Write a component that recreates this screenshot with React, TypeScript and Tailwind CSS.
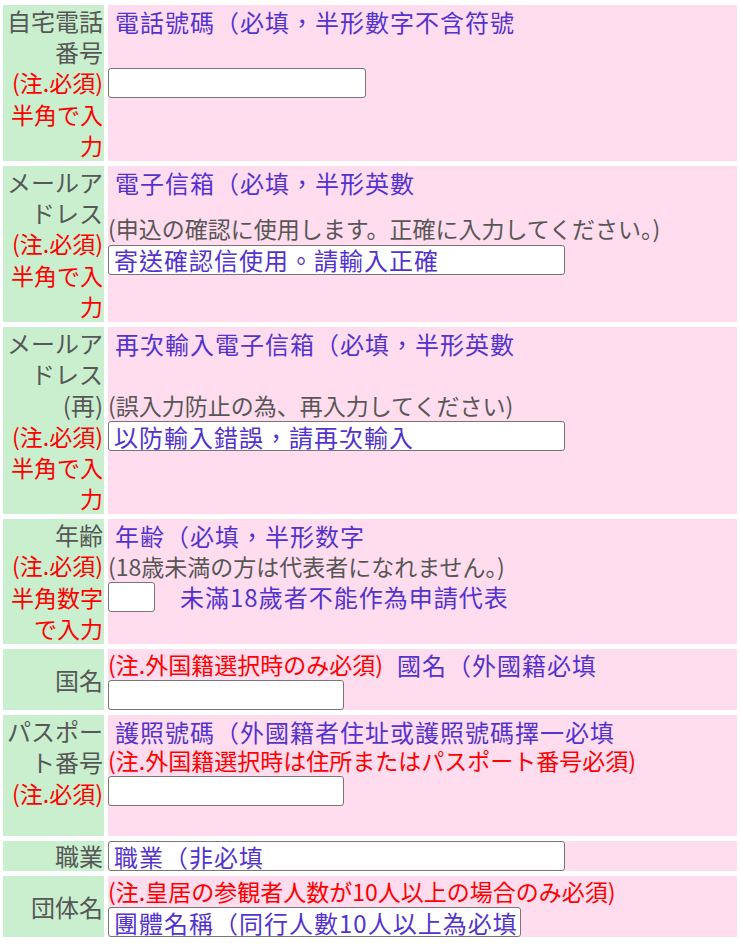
import React from "react";

const JP = "font-['Noto_Sans_CJK_JP',sans-serif]";
const TC = "font-['Noto_Sans_CJK_TC',sans-serif]";

function Gray({ children }: { children: React.ReactNode }) {
  return <div className="whitespace-nowrap text-[24px] text-[#575757]">{children}</div>;
}
function Red({ children }: { children: React.ReactNode }) {
  return <div className="whitespace-nowrap text-[23px] text-[#ff0000]">{children}</div>;
}

function Note({ children }: { children: React.ReactNode }) {
  return (
    <div
      className={`absolute left-[7px] top-[1px] whitespace-nowrap ${TC} font-normal text-[24px] leading-[31px] tracking-[1px] text-[#5333d0]`}
    >
      {children}
    </div>
  );
}

function Field({ w, ph }: { w: string; ph?: string }) {
  return (
    <input
      type="text"
      readOnly
      placeholder={ph}
      className={`${w} h-[30px] shrink-0 rounded-[3px] border border-[#767676] bg-white py-0 pl-[5px] pr-0 ${TC} font-normal text-[24px] leading-[28px] tracking-[1px] outline-none placeholder:text-[#5333d0]`}
    />
  );
}

function Line({ children, red }: { children: React.ReactNode; red?: boolean }) {
  return (
    <div
      className={`whitespace-nowrap text-[23px] leading-[31.2px] ${red ? "text-[#ff0000]" : "text-[#575757]"}`}
    >
      {children}
    </div>
  );
}

function Row({
  label,
  children,
  note,
  rowClass = "",
  labelClass = "justify-center",
}: {
  label: React.ReactNode;
  children: React.ReactNode;
  note?: React.ReactNode;
  rowClass?: string;
  labelClass?: string;
}) {
  return (
    <div className={`flex gap-[4px] ${rowClass}`}>
      <div
        className={`flex w-[101px] shrink-0 flex-col items-end bg-[#c9efcf] pr-[1px] text-right leading-[31.2px] ${labelClass}`}
      >
        {label}
      </div>
      <div className="relative flex w-[629px] flex-col items-start justify-center bg-[#ffdcee]">
        {note && <Note>{note}</Note>}
        {children}
      </div>
    </div>
  );
}

export default function App() {
  return (
    <div className={`min-h-[946px] w-[740px] bg-white ${JP}`}>
      <div className="flex flex-col gap-[5px] pl-[3px] pt-[5px]">
        <Row
          label={
            <>
              <Gray>自宅電話</Gray>
              <Gray>番号</Gray>
              <Red>(注.必須)</Red>
              <Red>半角で入</Red>
              <Red>力</Red>
            </>
          }
          note="電話號碼（必填，半形數字不含符號"
        >
          <Field w="w-[258px]" />
        </Row>

        <Row
          label={
            <>
              <Gray>メールア</Gray>
              <Gray>ドレス</Gray>
              <Red>(注.必須)</Red>
              <Red>半角で入</Red>
              <Red>力</Red>
            </>
          }
          note="電子信箱（必填，半形英數"
        >
          <Line>(申込の確認に使用します。正確に入力してください。)</Line>
          <Field w="w-[457px]" ph="寄送確認信使用。請輸入正確" />
        </Row>

        <Row
          label={
            <>
              <Gray>メールア</Gray>
              <Gray>ドレス</Gray>
              <Gray>(再)</Gray>
              <Red>(注.必須)</Red>
              <Red>半角で入</Red>
              <Red>力</Red>
            </>
          }
          note="再次輸入電子信箱（必填，半形英數"
        >
          <Line>(誤入力防止の為、再入力してください)</Line>
          <Field w="w-[457px]" ph="以防輸入錯誤，請再次輸入" />
        </Row>

        <Row
          label={
            <>
              <Gray>年齢</Gray>
              <Red>(注.必須)</Red>
              <Red>半角数字</Red>
              <Red>で入力</Red>
            </>
          }
          note="年齢（必填，半形数字"
        >
          <Line>(18歳未満の方は代表者になれません。)</Line>
          <div className="flex items-center">
            <Field w="w-[47px]" />
            <span
              className={`ml-[25px] whitespace-nowrap ${TC} font-normal text-[24px] leading-[30px] tracking-[1px] text-[#5333d0]`}
            >
              未滿18歲者不能作為申請代表
            </span>
          </div>
        </Row>

        <Row label={<Gray>国名</Gray>}>
          <div className="flex items-center whitespace-nowrap leading-[31.2px]">
            <span className="text-[23px] text-[#ff0000]">(注.外国籍選択時のみ必須)</span>
            <span className={`ml-[14px] ${TC} font-normal text-[24px] tracking-[1px] text-[#5333d0]`}>
              國名（外國籍必填
            </span>
          </div>
          <Field w="w-[236px]" />
        </Row>

        <Row
          rowClass="h-[121px]"
          labelClass="justify-start"
          label={
            <>
              <Gray>パスポー</Gray>
              <Gray>ト番号</Gray>
              <Red>(注.必須)</Red>
            </>
          }
          note="護照號碼（外國籍者住址或護照號碼擇一必填"
        >
          <Line red>(注.外国籍選択時は住所またはパスポート番号必須)</Line>
          <Field w="w-[236px]" />
        </Row>

        <Row
          label={
            <div className="whitespace-nowrap text-[24px] leading-[30px] text-[#575757]">職業</div>
          }
        >
          <Field w="w-[457px]" ph="職業（非必填" />
        </Row>

        <Row label={<Gray>団体名</Gray>}>
          <Line red>(注.皇居の参観者人数が10人以上の場合のみ必須)</Line>
          <Field w="w-[413px]" ph="團體名稱（同行人數10人以上為必填" />
        </Row>
      </div>
    </div>
  );
}
